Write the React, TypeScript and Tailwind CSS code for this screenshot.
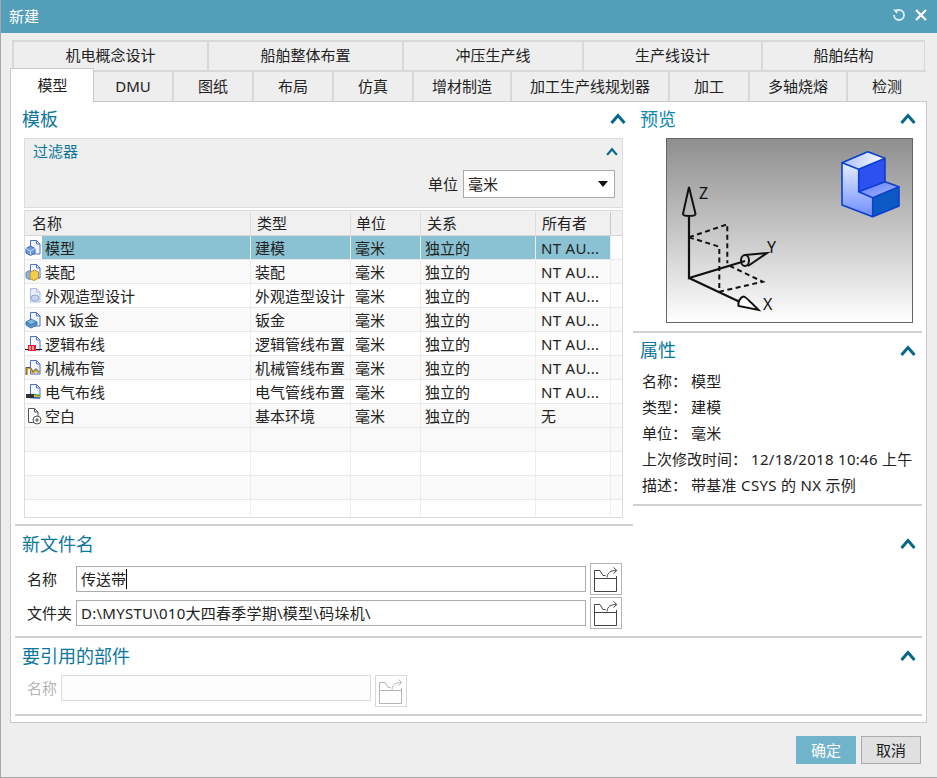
const rowOne = [
  { label: "机电概念设计", w: "w-[195px]" },
  { label: "船舶整体布置", w: "w-[195px]" },
  { label: "冲压生产线", w: "w-[180px]" },
  { label: "生产线设计", w: "w-[179px]" },
  { label: "船舶结构", w: "w-[164px]" },
];

const rowTwo = [
  { label: "DMU", w: "w-[78px]" },
  { label: "图纸", w: "w-[80px]" },
  { label: "布局", w: "w-[80px]" },
  { label: "仿真", w: "w-[80px]" },
  { label: "增材制造", w: "w-[98px]" },
  { label: "加工生产线规划器", w: "w-[158px]" },
  { label: "加工", w: "w-[80px]" },
  { label: "多轴烧熔", w: "w-[98px]" },
  { label: "检测", w: "w-[80px]" },
];

const rows = [
  { icon: "model", name: "模型", type: "建模", owner: "NT AU..." },
  { icon: "assy", name: "装配", type: "装配", owner: "NT AU..." },
  { icon: "shape", name: "外观造型设计", type: "外观造型设计", owner: "NT AU..." },
  { icon: "sheet", name: "NX 钣金", type: "钣金", owner: "NT AU..." },
  { icon: "logic", name: "逻辑布线", type: "逻辑管线布置", owner: "NT AU..." },
  { icon: "pipe", name: "机械布管", type: "机械管线布置", owner: "NT AU..." },
  { icon: "wire", name: "电气布线", type: "电气管线布置", owner: "NT AU..." },
  { icon: "blank", name: "空白", type: "基本环境", owner: "无" },
];

const props = [
  { k: "名称：", v: "模型" },
  { k: "类型：", v: "建模" },
  { k: "单位：", v: "毫米" },
  { k: "上次修改时间：", v: "12/18/2018 10:46 上午" },
  { k: "描述：", v: "带基准 CSYS 的 NX 示例" },
];

function Chevron({ small }: { small?: boolean }) {
  return (
    <svg width={small ? 12 : 16} height={small ? 9 : 11} viewBox="0 0 16 11" fill="none">
      <path d="M1.5 10 L8 2.5 L14.5 10" stroke="#07678a" strokeWidth="3" />
    </svg>
  );
}

function Page({ stroke = "#4a6fd0", fill = "#f4f7ff" }: { stroke?: string; fill?: string }) {
  return <path d="M5.5 1.5h6l3.5 3.5v10h-9.500z M11.500 1.500v3.500h3.500" fill={fill} stroke={stroke} strokeWidth="1" />;
}

function RowIcon({ kind }: { kind: string }) {
  return (
    <svg width="17" height="18" viewBox="0 0 17 18" className="shrink-0">
      {kind === "model" && (
        <>
          <Page />
          <path d="M1 9.500l4.500-2.500 4.500 2.500v4.500l-4.500 2.500-4.500-2.500z" fill="#6b9be0" stroke="#3a66b4" />
          <path d="M1 9.500l4.500 2.500 4.500-2.500M5.500 12v4" fill="none" stroke="#c9dcf7" />
        </>
      )}
      {kind === "assy" && (
        <>
          <Page />
          <path d="M1 9.500l3.500-2 3 1.500v6l-3 1.500-3.500-2z" fill="#8fb3e6" stroke="#5a82c0" />
          <path d="M5 9.500l4.500-2.500 4 2v6l-4.500 2.500-4-2z" fill="#f5cb4a" stroke="#b59122" />
        </>
      )}
      {kind === "shape" && (
        <>
          <Page stroke="#a9bce6" fill="#e8eefb" />
          <ellipse cx="10" cy="11" rx="4" ry="3" fill="#c4d5f1" stroke="#8ea8d8" />
        </>
      )}
      {kind === "sheet" && (
        <>
          <Page />
          <path d="M1 11l5-3 6 3-6 3z" fill="#82b8e4" stroke="#3a78b4" />
          <path d="M1 11v3l5 3 6-3v-3l-6 3z" fill="#5a96cc" stroke="#3a78b4" />
        </>
      )}
      {kind === "logic" && (
        <>
          <Page />
          <path d="M0 14.500h17" stroke="#111" />
          <rect x="3" y="10" width="8" height="6" fill="#e02030" />
          <path d="M5 11v4M8 11v4" stroke="#fff" />
        </>
      )}
      {kind === "pipe" && (
        <>
          <Page />
          <path d="M2 16V9l3 0 3 5 3-3 3 3" fill="none" stroke="#c9a640" strokeWidth="2.200" />
          <path d="M1 16V8.500h4.500l2.500 4 3-3 3.500 3.500" fill="none" stroke="#444" strokeWidth="0.800" />
        </>
      )}
      {kind === "wire" && (
        <>
          <Page />
          <rect x="1" y="11" width="8" height="4" fill="#333" />
          <path d="M9 11.500l6 1" stroke="#3aa83a" strokeWidth="1.500" />
          <path d="M9 13l6 1" stroke="#e0b020" strokeWidth="1.500" />
          <path d="M9 14.500l6 .5" stroke="#3a6ad0" strokeWidth="1.500" />
        </>
      )}
      {kind === "blank" && (
        <>
          <path d="M9 15.500H3.500v-14h6l3.500 3.500v4M9.500 1.500v3.500H13" fill="#fff" stroke="#555" />
          <circle cx="12" cy="13" r="4" fill="#fff" stroke="#555" />
          <path d="M12 10.800v4.400M9.800 13h4.400" stroke="#555" />
        </>
      )}
    </svg>
  );
}

function FolderButton({ off }: { off?: boolean }) {
  const c = off ? "#b5b5b5" : "#444444";
  return (
    <button className={`w-8 h-8 shrink-0 block border ${off ? "border-[#d8d8d8]" : "border-[#b4b4b4]"} bg-white`}>
      <svg width="30" height="30" viewBox="0 0 30 30" fill="none" className="block">
        <path d="M3.500 6.500H9L12 11.500H14.500" stroke={c} />
        <path d="M3.500 6.500V27.500H25.500V12" stroke={c} />
        <path d="M3.500 14.500H25.500" stroke={c} />
        <path d="M16 13.500C16.500 8.500 19.500 6.500 25.500 6.500M22.500 3.500L25.800 6.500L22.500 9.500" stroke={c} />
      </svg>
    </button>
  );
}

function Preview() {
  return (
    <div className="w-[247px] h-[185px] border border-[#666666] bg-gradient-to-b from-[#8f8f8f] to-white ml-[33px]">
      <svg width="245" height="183" viewBox="0 0 245 183" fill="none">
        <defs>
          <linearGradient id="l" x1="0" y1="0" x2="0" y2="1">
            <stop offset="0" stopColor="#e6efff" />
            <stop offset="1" stopColor="#6f8dff" />
          </linearGradient>
          <linearGradient id="t" x1="0" y1="0" x2="1" y2="0">
            <stop offset="0" stopColor="#a6bdff" />
            <stop offset="1" stopColor="#ffffff" />
          </linearGradient>
          <linearGradient id="s" x1="0" y1="0" x2="1" y2="1">
            <stop offset="0" stopColor="#5f7dfa" />
            <stop offset="1" stopColor="#a6b8ff" />
          </linearGradient>
        </defs>
        {/* cube */}
        <path d="M175 23.700L200.700 12.700L218 19.300L191.700 30.300z" fill="url(#t)" />
        <path d="M175 23.700L191.700 30.300V52.700L205.700 58.700V77.700L175 66z" fill="url(#l)" />
        <path d="M191.700 30.300L218 19.300V42.700L191.700 52.700z" fill="#2d50f0" />
        <path d="M191.700 52.700L218 42.700L232 47.700L205.700 58.700z" fill="url(#s)" />
        <path d="M205.700 58.700L232 47.700V67L205.700 77.700z" fill="#0b5ac4" />
        <path
          d="M175 23.700L200.700 12.700L218 19.300V42.700L232 47.700V67L205.700 77.700L175 66zM175 23.700L191.700 30.300V52.700L205.700 58.700V77.700M191.700 30.300L218 19.300M191.700 52.700L218 42.700M205.700 58.700L232 47.700"
          stroke="#0a3fd0"
          strokeWidth="1.600"
          strokeLinejoin="round"
        />
        {/* axes */}
        <path d="M22 76V139L78 122M22 139L73 163" stroke="#111" strokeWidth="2.200" />
        <path d="M22 48c-2 9-5 22-6 27 0 2.500 12.500 2.500 12.500 0-1-5-4.500-18-6.500-27z" fill="none" stroke="#111" strokeWidth="2" />
        <path d="M78 116L100 114L81 127" fill="none" stroke="#111" strokeWidth="2" />
        <ellipse cx="78" cy="121.500" rx="4" ry="5.500" fill="none" stroke="#111" strokeWidth="2" />
        <path d="M71.500 167c-1-4 2-9 5-9.500 1-.2 3 1 15 13.500z" fill="#fff" stroke="#111" strokeWidth="2" />
        <path d="M22 98.300L60.300 85.300V124.300M22 98.300L52.300 107.700V152.700L95.700 142.700L63 127" stroke="#111" strokeWidth="2" strokeDasharray="5 3.500" />
        <text x="32" y="60" fontSize="16" fill="#111">Z</text>
        <text x="100" y="114" fontSize="16" fill="#111">Y</text>
        <text x="96" y="171" fontSize="16" fill="#111">X</text>
      </svg>
    </div>
  );
}

export default function App() {
  return (
    <div className="w-[937px] h-[778px] bg-[#eeeeee] flex flex-col text-[15px] text-[#222222] border-l border-b border-[#a8a8a8] font-['Noto_Sans','Noto_Sans_CJK_SC',sans-serif] leading-none overflow-hidden">
      <div className="h-[33px] -ml-px bg-[#539eb9] flex items-center justify-between pl-[9px] pr-[10px] text-white shrink-0">
        <span className="text-[15px] -mt-[1px]">新建</span>
        <div className="flex items-center gap-[9px] -mt-[3px]">
          <svg width="14" height="14" viewBox="0 0 14 14" fill="none">
            <path d="M4 3C5 2.300 6 2 7 2a5 5 0 1 1-5 5" stroke="#dff0f6" strokeWidth="1.800" />
            <path d="M1 1.500L5.500 1.500L5 6z" fill="#dff0f6" />
          </svg>
          <svg width="12" height="12" viewBox="0 0 12 12" fill="none">
            <path d="M1 1L11 11M11 1L1 11" stroke="#fff" strokeWidth="2.200" />
          </svg>
        </div>
      </div>

      <div className="pt-[7px] pl-[9px] pr-[9px] flex-1 flex flex-col">
        <div className="flex pl-[2px] h-[30px]">
          {rowOne.map((t) => (
            <div key={t.label} className={`${t.w} flex items-center justify-center pb-[2px] border-t-2 border-l-2 border-[#d8d8d8] last:border-r`}>
              {t.label}
            </div>
          ))}
        </div>
        <div className="flex h-[31px] relative z-10">
          <div className="w-[84px] h-[34px] -mt-[2px] pl-[1px] bg-white border border-b-0 border-[#c9c9c9] flex items-center justify-center shrink-0">模型</div>
          {rowTwo.map((t, i) => (
            <div key={t.label} className={`${t.w} h-full flex items-center justify-center border-t-2 ${i > 0 ? "border-l-2" : ""} border-[#d8d8d8] shrink-0`}>
              {t.label}
            </div>
          ))}
        </div>

        <div className="w-[917px] h-[622px] bg-white border border-[#c9c9c9] flex flex-col pl-[4px] pr-[4px]">
          <div className="flex h-[424px]">
            <div className="w-[618px] pl-[7px] pr-[10px] flex flex-col border-b-2 border-[#d0d0d0]">
              <div className="h-[36px] pb-[3px] flex items-center justify-between shrink-0">
                <span className="text-[18px] text-[#0b779c]">模板</span>
                <span className="mr-[-3px]"><Chevron /></span>
              </div>
              <div className="h-[70px] ml-[2px] bg-[#efefef] border border-[#dcdcdc] flex flex-col shrink-0">
                <div className="flex justify-between items-center pl-[8px] pr-[4px] pt-[5px]">
                  <span className="text-[#0b779c]">过滤器</span>
                  <Chevron small />
                </div>
                <div className="flex justify-end items-center mt-[11px] pr-[7px] gap-[5px]">
                  <span>单位</span>
                  <div className="w-[152px] h-[28px] bg-white border border-[#ababab] flex items-center justify-between pl-[4px] pr-[6px]">
                    <span>毫米</span>
                    <span className="w-0 h-0 border-x-[5px] border-x-transparent border-t-[6px] border-t-[#111111]" />
                  </div>
                </div>
              </div>
              <div className="mt-[2px] ml-[2px] h-[308px] border border-[#dcdcdc] overflow-hidden shrink-0">
                <div className="flex h-[25px] pt-[1px] bg-[#f0f0f0] border-b border-[#d6d6d6]">
                  <div className="w-[226px] pl-[7px] flex items-center border-r border-[#dcdcdc]">名称</div>
                  <div className="w-[100px] pl-[6px] flex items-center border-r border-[#dcdcdc]">类型</div>
                  <div className="w-[70px] pl-[5px] flex items-center border-r border-[#dcdcdc]">单位</div>
                  <div className="w-[115px] pl-[6px] flex items-center border-r border-[#dcdcdc]">关系</div>
                  <div className="w-[75px] pl-[6px] flex items-center border-r border-[#c8c8c8]">所有者</div>
                  <div className="flex-1" />
                </div>
                {rows.map((r, i) => (
                  <div key={r.icon} className={`flex h-[24px] border-b border-[#e8e8e8] ${i % 2 === 1 ? "bg-[#f9f9f9]" : "bg-white"}`}>
                    <div className="w-[226px] flex items-center border-r border-[#ececec]">
                      <RowIcon kind={r.icon} />
                      <div className={`flex-1 h-full pt-[1px] flex items-center ${i === 0 ? "bg-[#8bc2d3]" : ""} pl-[3px]`}>{r.name}</div>
                    </div>
                    <div className={`w-[100px] pl-[4px] pt-[1px] flex items-center border-r border-[#ececec] ${i === 0 ? "bg-[#8bc2d3]" : ""}`}>{r.type}</div>
                    <div className={`w-[70px] pl-[4px] pt-[1px] flex items-center border-r border-[#ececec] ${i === 0 ? "bg-[#8bc2d3]" : ""}`}>毫米</div>
                    <div className={`w-[115px] pl-[4px] pt-[1px] flex items-center border-r border-[#ececec] ${i === 0 ? "bg-[#8bc2d3]" : ""}`}>独立的</div>
                    <div className={`w-[75px] pl-[5px] pt-[1px] flex items-center border-r border-[#ececec] whitespace-nowrap tracking-[0.3px] ${i === 0 ? "bg-[#8bc2d3]" : ""}`}>{r.owner}</div>
                    <div className="flex-1" />
                  </div>
                ))}
                {[0, 1, 2, 3, 4].map((i) => (
                  <div key={i} className={`flex h-[24px] border-b border-[#e8e8e8] ${i % 2 === 0 ? "bg-[#f9f9f9]" : "bg-white"}`}>
                    <div className="w-[226px] border-r border-[#ececec]" />
                    <div className="w-[100px] border-r border-[#ececec]" />
                    <div className="w-[70px] border-r border-[#ececec]" />
                    <div className="w-[115px] border-r border-[#ececec]" />
                    <div className="w-[75px] border-r border-[#ececec]" />
                  </div>
                ))}
              </div>
            </div>

            <div className="flex-1 flex flex-col">
              <div className="h-[36px] pb-[3px] pl-[7px] pr-[6px] flex items-center justify-between shrink-0">
                <span className="text-[18px] text-[#0b88ad]">预览</span>
                <Chevron />
              </div>
              <Preview />
              <div className="mt-[8px] h-[175px] border-y-2 border-[#d0d0d0] flex flex-col pl-[7px] pr-[6px]">
                <div className="h-[34px] flex items-center justify-between shrink-0">
                  <span className="text-[18px] text-[#0b779c]">属性</span>
                  <Chevron />
                </div>
                <div className="flex flex-col gap-[12px] pt-[7px] pl-[2px]">
                  {props.map((p) => (
                    <div key={p.k} className="flex h-[14px] items-center whitespace-nowrap">
                      <span className="mr-[4px]">{p.k}</span>
                      <span className="tracking-[0.3px]">{p.v}</span>
                    </div>
                  ))}
                </div>
              </div>
            </div>
          </div>

          <div className="h-[112px] border-b-2 border-[#d0d0d0] pl-[7px] pr-[6px] flex flex-col">
            <div className="h-[37px] pb-[2px] flex items-center justify-between shrink-0">
              <span className="text-[18px] text-[#0b779c]">新文件名</span>
              <Chevron />
            </div>
            <div className="flex items-center h-[32px] pl-[5px]">
              <span className="w-[49px] shrink-0">名称</span>
              <div className="w-[510px] h-[26px] border border-[#ababab] bg-white flex items-center pl-[4px]">
                传送带<span className="w-px h-[20px] bg-black" />
              </div>
              <span className="ml-[4px]"><FolderButton /></span>
            </div>
            <div className="flex items-center h-[32px] mt-[2px] pl-[5px]">
              <span className="w-[49px] shrink-0 whitespace-nowrap">文件夹</span>
              <div className="w-[510px] h-[26px] border border-[#ababab] bg-white flex items-center pl-[4px] whitespace-nowrap tracking-[0.25px]">
                D:\MYSTU\010大四春季学期\模型\码垛机\
              </div>
              <span className="ml-[4px]"><FolderButton /></span>
            </div>
          </div>

          <div className="h-[78px] border-b-2 border-[#d0d0d0] pl-[7px] pr-[6px] flex flex-col">
            <div className="h-[37px] pb-[2px] flex items-center justify-between shrink-0">
              <span className="text-[18px] text-[#0b779c]">要引用的部件</span>
              <Chevron />
            </div>
            <div className="flex items-start pl-[5px] text-[#b5b5b5]">
              <span className="w-[34px] shrink-0 pt-[6px]">名称</span>
              <div className="w-[310px] h-[26px] border border-[#dcdcdc] bg-[#fcfcfc]" />
              <span className="ml-[4px]"><FolderButton off /></span>
            </div>
          </div>
        </div>

        <div className="flex justify-end gap-[5px] pr-[7px] pt-[13px]">
          <div className="w-[60px] h-[28px] bg-[#71b3cb] text-white flex items-center justify-center">确定</div>
          <div className="w-[60px] h-[28px] bg-[#e0e0e0] border border-[#ababab] flex items-center justify-center">取消</div>
        </div>
      </div>
    </div>
  );
}
